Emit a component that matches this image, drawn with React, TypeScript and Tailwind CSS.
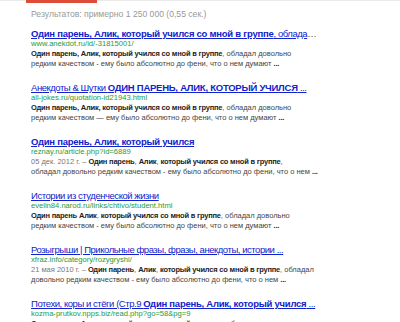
import React from 'react';

type Part = { t: string; b?: boolean };

interface Result {
    title: Part[];
    titleTail?: string;
    url: string;
    date?: string;
    lines: Part[][];
}

const results: Result[] = [
    {
        title: [{ t: 'Один парень, Алик, который учился со мной в группе', b: true }, { t: ', облада' }],
        titleTail: '…',
        url: 'www.anekdot.ru/id/-31815001/',
        lines: [
            [{ t: 'Один парень, Алик, который учился со мной в группе', b: true }, { t: ', обладал довольно' }],
            [{ t: 'редким качеством - ему было абсолютно до фени, что о нем думают ' }, { t: '...', b: true }],
        ],
    },
    {
        title: [{ t: 'Анекдоты & Шутки ' }, { t: 'ОДИН ПАРЕНЬ, АЛИК, КОТОРЫЙ УЧИЛСЯ', b: true }, { t: ' ...' }],
        url: 'all-jokes.ru/quotation-id21943.html',
        lines: [
            [{ t: 'Один парень, Алик, который учился со мной в группе', b: true }, { t: ', обладал довольно' }],
            [{ t: 'редким качеством — ему было абсолютно до фени, что о нем думают ' }, { t: '...', b: true }],
        ],
    },
    {
        title: [{ t: 'Один парень, Алик, который учился', b: true }],
        url: 'reznay.ru/article.php?id=6889',
        date: '05 дек. 2012 г. – ',
        lines: [
            [{ t: 'Один парень', b: true }, { t: ', ' }, { t: 'Алик', b: true }, { t: ', ' }, { t: 'который учился со мной в группе', b: true }, { t: ',' }],
            [{ t: 'обладал довольно редким качеством - ему было абсолютно до фени, что о нем ' }, { t: '...', b: true }],
        ],
    },
    {
        title: [{ t: 'Истории из студенческой жизни' }],
        url: 'evelin84.narod.ru/links/chtivo/student.html',
        lines: [
            [{ t: 'Один парень Алик', b: true }, { t: ', ' }, { t: 'который учился со мной в группе', b: true }, { t: ', обладал довольно' }],
            [{ t: 'редким качеством - ему было абсолютно до фени, что о нем думают ' }, { t: '...', b: true }],
        ],
    },
    {
        title: [{ t: 'Розыгрыши | Прикольные фразы, фразы, анекдоты, истории ...' }],
        url: 'xfraz.info/category/rozygryshi/',
        date: '21 мая 2010 г. – ',
        lines: [
            [{ t: 'Один парень', b: true }, { t: ', ' }, { t: 'Алик', b: true }, { t: ', ' }, { t: 'который учился со мной в группе', b: true }, { t: ', обладал' }],
            [{ t: 'довольно редким качеством - ему было абсолютно до фени, что о нем ' }, { t: '...', b: true }],
        ],
    },
    {
        title: [{ t: 'Потехи, коры и стёги (Стр.9 ' }, { t: 'Один парень, Алик, который учился', b: true }, { t: ' ...' }],
        url: 'kozma-prutkov.npps.biz/read.php?go=58&pg=9',
        lines: [
            [{ t: 'Один парень, Алик, который учился со мной в группе', b: true }, { t: ', обладал довольно' }],
        ],
    },
];

function Parts({ parts, boldClass, regClass }: { parts: Part[]; boldClass: string; regClass?: string }) {
    return (
        <>
            {parts.map((p, i) =>
                p.b ? (
                    <b key={i} className={boldClass}>
                        {p.t}
                    </b>
                ) : (
                    <span key={i} className={regClass}>
                        {p.t}
                    </span>
                )
            )}
        </>
    );
}

export default function App() {
    return (
        <div className="w-[400px] h-[322px] overflow-hidden bg-white font-['Liberation_Sans',Arial,sans-serif]">
            {/* top strip */}
            <div className="relative h-[1px] bg-[#ebebeb]">
                <div className="absolute left-[26px] top-0 h-[3px] w-[71px] bg-[#dd4b39]" />
            </div>

            <div className="pl-[31px] pt-[8px]">
                <div className="text-[8.6px] leading-[10px] text-[#999]">
                    Результатов: примерно 1 250 000 (0,55 сек.)
                </div>

                <div className="mt-[9px] flex flex-col gap-[13px]">
                    {results.map((r, i) => (
                        <div key={i} className="whitespace-nowrap">
                            <div className="text-[9.5px] leading-[11px]">
                                <a className="text-[#1122cc] underline decoration-[#1122cc]">
                                    <Parts
                                        parts={r.title}
                                        boldClass="font-bold tracking-[-0.25px]"
                                        regClass="tracking-[-0.45px]"
                                    />
                                </a>
                                {r.titleTail && <span className="text-[#444]">{r.titleTail}</span>}
                            </div>
                            <div className="text-[7.6px] leading-[10px] text-[#1f9a3a]">{r.url}</div>
                            <div className="text-[7.5px] leading-[10px] text-[#444]">
                                {r.lines.map((line, j) => (
                                    <div key={j}>
                                        {j === 0 && r.date && <span className="text-[#777]">{r.date}</span>}
                                        <Parts parts={line} boldClass="font-bold tracking-[-0.2px] text-[#222]" />
                                    </div>
                                ))}
                            </div>
                        </div>
                    ))}
                </div>
            </div>
        </div>
    );
}
